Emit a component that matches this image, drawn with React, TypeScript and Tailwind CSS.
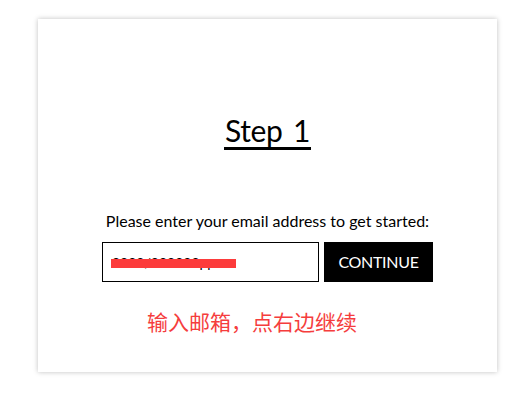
import React from "react";

const App: React.FC = () => {
  return (
    <div className="w-[521px] h-[398px] bg-white pt-[19px] pl-[38px] font-['Lato','Liberation_Sans',sans-serif]">
      <div className="w-[459px] h-[353px] bg-white shadow-[0_0_5px_rgba(0,0,0,0.25)] flex flex-col items-center">
        {/* heading */}
        <h1 className="mt-[94px] text-[30px] leading-[34px] text-black border-b-[3px] border-black px-[1px] [word-spacing:3px] tracking-[-0.3px]">
          Step 1
        </h1>

        <p className="mt-[61px] text-[16px] leading-[20px] text-black">
          Please enter your email address to get started:
        </p>

        <div className="mt-[11px] flex gap-[5px]">
          <div className="relative w-[217px] h-[40px] border border-black flex items-center px-[9px] overflow-hidden">
            <span className="text-[14px] text-black whitespace-nowrap">8888/888888pp</span>
            {/* red redaction mark */}
            <div className="absolute left-[8px] top-[16px] w-[125px] h-[9px] bg-[#fc3b3b]" />
          </div>
          <button className="w-[109px] h-[40px] bg-black text-white text-[16px] tracking-[-0.3px]">
            CONTINUE
          </button>
        </div>

        <p className="mt-[26px] mr-[31px] text-[21px] leading-[26px] text-[#f53d3d] font-['Noto_Sans_CJK_SC',sans-serif]">
          输入邮箱，点右边继续
        </p>
      </div>
    </div>
  );
};

export default App;
